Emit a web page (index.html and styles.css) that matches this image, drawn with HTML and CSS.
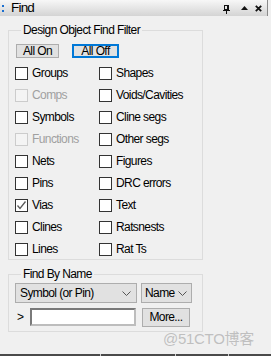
FILE: index.html
```html
<!DOCTYPE html>
<html>
<head>
<meta charset="utf-8">
<link rel="stylesheet" href="styles.css">
</head>
<body>
<div class="panel">
  <div class="titlebar">
    <span class="grip"><i></i><i></i></span>
    <span class="title">Find</span>
    <span class="tb-icons">
      <svg class="ic-pin" width="7" height="9" viewBox="0 0 7 9"><rect x="1.5" y="0.5" width="4" height="4" fill="none" stroke="#111"/><rect x="0" y="5" width="7" height="1" fill="#111"/><rect x="3" y="6" width="1" height="3" fill="#111"/><rect x="4" y="1" width="1" height="4" fill="#111"/></svg>
      <svg class="ic-up" width="7" height="4" viewBox="0 0 7 4"><path d="M0 4 L3.5 0 L7 4 Z" fill="#111"/></svg>
      <svg class="ic-x" width="7" height="7" viewBox="0 0 7 7"><path d="M0.8 0.8 L6.2 6.2 M6.2 0.8 L0.8 6.2" stroke="#111" stroke-width="1.8"/></svg>
    </span>
  </div>

  <fieldset class="group group-filter">
    <legend>Design Object Find Filter</legend>
    <div class="btn-row">
      <button class="btn btn-on">All On</button>
      <button class="btn btn-off">All Off</button>
    </div>
    <div class="checks">
      <label class="chk"><span class="box"></span>Groups</label>
      <label class="chk"><span class="box"></span>Shapes</label>
      <label class="chk disabled"><span class="box"></span>Comps</label>
      <label class="chk"><span class="box"></span>Voids/Cavities</label>
      <label class="chk"><span class="box"></span>Symbols</label>
      <label class="chk"><span class="box"></span>Cline segs</label>
      <label class="chk disabled"><span class="box"></span>Functions</label>
      <label class="chk"><span class="box"></span>Other segs</label>
      <label class="chk"><span class="box"></span>Nets</label>
      <label class="chk"><span class="box"></span>Figures</label>
      <label class="chk"><span class="box"></span>Pins</label>
      <label class="chk"><span class="box"></span>DRC errors</label>
      <label class="chk"><span class="box checked"><svg width="11" height="11" viewBox="0 0 11 11"><path d="M1.5 5.5 L4 8.5 L9.5 1.5" fill="none" stroke="#5a5a5a" stroke-width="1.3"/></svg></span>Vias</label>
      <label class="chk"><span class="box"></span>Text</label>
      <label class="chk"><span class="box"></span>Clines</label>
      <label class="chk"><span class="box"></span>Ratsnests</label>
      <label class="chk"><span class="box"></span>Lines</label>
      <label class="chk"><span class="box"></span>Rat Ts</label>
    </div>
  </fieldset>

  <fieldset class="group group-name">
    <legend>Find By Name</legend>
    <div class="name-row">
      <div class="combo combo-type"><span>Symbol (or Pin)</span><svg width="9" height="5" viewBox="0 0 9 5"><path d="M0.5 0.5 L4.5 4.5 L8.5 0.5" fill="none" stroke="#555"/></svg></div>
      <div class="combo combo-by"><span>Name</span><svg width="9" height="5" viewBox="0 0 9 5"><path d="M0.5 0.5 L4.5 4.5 L8.5 0.5" fill="none" stroke="#555"/></svg></div>
    </div>
    <div class="name-row row2">
      <span class="prompt">&gt;</span>
      <span class="textbox"></span>
      <button class="btn btn-more">More...</button>
    </div>
    <span class="watermark">@51CTO博客</span>
  </fieldset>

  <div class="bottom-bar"><i></i><i></i><i></i></div>
</div>
</body>
</html>
```

FILE: styles.css
```css
html, body {
  margin: 0;
  padding: 0;
}
body {
  background: #f0f0f0;
  font-family: "Liberation Sans", Arial, sans-serif;
  font-size: 12px;
  color: #000;
  letter-spacing: -0.6px;
}
.panel {
  width: 271px;
  height: 356px;
  overflow: hidden;
  position: relative;
}
.titlebar {
  height: 16px;
  width: 267px;
  border-right: 1px solid #8a8a8a;
  background: linear-gradient(#f7f7f7, #d4d4d4);
  display: flex;
  align-items: center;
  box-sizing: content-box;
}
.grip {
  display: flex;
  flex-direction: column;
  gap: 3px;
  margin-left: 2px;
  width: 2px;
}
.grip i {
  display: block;
  width: 2px;
  height: 2px;
  background: #1a6fd0;
}
.title {
  margin-left: 7px;
  font-size: 13.5px;
  letter-spacing: -0.8px;
  line-height: 16px;
}
.tb-icons {
  margin-left: auto;
  margin-right: 5px;
  display: flex;
  align-items: center;
}
.ic-pin { margin-right: 11px; margin-top: 3px; }
.ic-up { margin-right: 7px; margin-top: -1px; }

.group {
  border: 1px solid #dcdcdc;
  margin: 0 0 0 8px;
  padding: 0;
  width: 187px;
  position: relative;
}
.group legend {
  padding: 0 2px;
  margin-left: 6px;
  line-height: 14px;
}
.group-filter {
  margin-top: 7px;
  padding: 7px 0 3px 6px;
}
.btn-row {
  display: flex;
}
.btn {
  font-family: inherit;
  font-size: 12px;
  letter-spacing: -0.6px;
  background: #e1e1e1;
  border: 1px solid #adadad;
  padding: 0;
  margin: 0;
  height: 14px;
  line-height: 12px;
  color: #000;
}
.btn-on {
  margin-left: 1px;
  width: 43px;
}
.btn-off {
  margin-left: 13px;
  width: 47px;
  border: 2px solid #0078d7;
  line-height: 10px;
}
.checks {
  margin-top: 9px;
  display: grid;
  grid-template-columns: 84px 1fr;
  row-gap: 9px;
}
.chk {
  display: flex;
  align-items: center;
  height: 13px;
  line-height: 13px;
  white-space: nowrap;
}
.box {
  width: 11px;
  height: 11px;
  border: 1px solid #333;
  background: #fff;
  margin-right: 4px;
  flex: none;
  display: flex;
  align-items: center;
  justify-content: center;
}
.chk.disabled {
  color: #a0a0a0;
}
.chk.disabled .box {
  border-color: #cccccc;
  background: #f4f4f4;
}

.group-name {
  margin-top: 7px;
  padding: 2px 0 8px 6px;
  height: 53px;
  box-sizing: content-box;
}
.name-row {
  display: flex;
  align-items: center;
}
.combo {
  background: #e1e1e1;
  border: 1px solid #adadad;
  display: flex;
  align-items: center;
  justify-content: space-between;
  padding: 0 5px 0 4px;
  box-sizing: border-box;
  height: 20px;
}
.combo-type { width: 122px; }
.combo-by { width: 51px; margin-left: 4px; padding-left: 3px; padding-right: 4px; }
.combo svg { flex: none; }
.row2 {
  margin-top: 4px;
  height: 20px;
}
.prompt {
  width: 15px;
  padding-left: 2px;
  box-sizing: border-box;
  font-size: 12px;
}
.textbox {
  width: 106px;
  height: 18px;
  box-sizing: border-box;
  border: 2px solid #7a7a7a;
  border-right-color: #bdbdbd;
  border-bottom-color: #bdbdbd;
  background: #fff;
}
.btn-more {
  margin-left: 6px;
  width: 48px;
  height: 19px;
  margin-top: 1px;
  line-height: 17px;
}
.watermark {
  position: absolute;
  left: 154px;
  top: 46px;
  font-family: "Liberation Sans", "Noto Sans CJK SC", sans-serif;
  font-size: 15px;
  letter-spacing: -0.3px;
  color: rgba(170, 170, 170, 0.7);
  white-space: nowrap;
}
.bottom-bar {
  position: absolute;
  left: 0;
  right: 0;
  bottom: 0;
  height: 2px;
  background: #4a4a4a;
}
.bottom-bar i {
  position: absolute;
  top: 0;
  width: 1px;
  height: 2px;
  background: #d0d0d0;
}
.bottom-bar i:nth-child(1) { left: 100px; }
.bottom-bar i:nth-child(2) { left: 175px; }
.bottom-bar i:nth-child(3) { left: 228px; }
```
